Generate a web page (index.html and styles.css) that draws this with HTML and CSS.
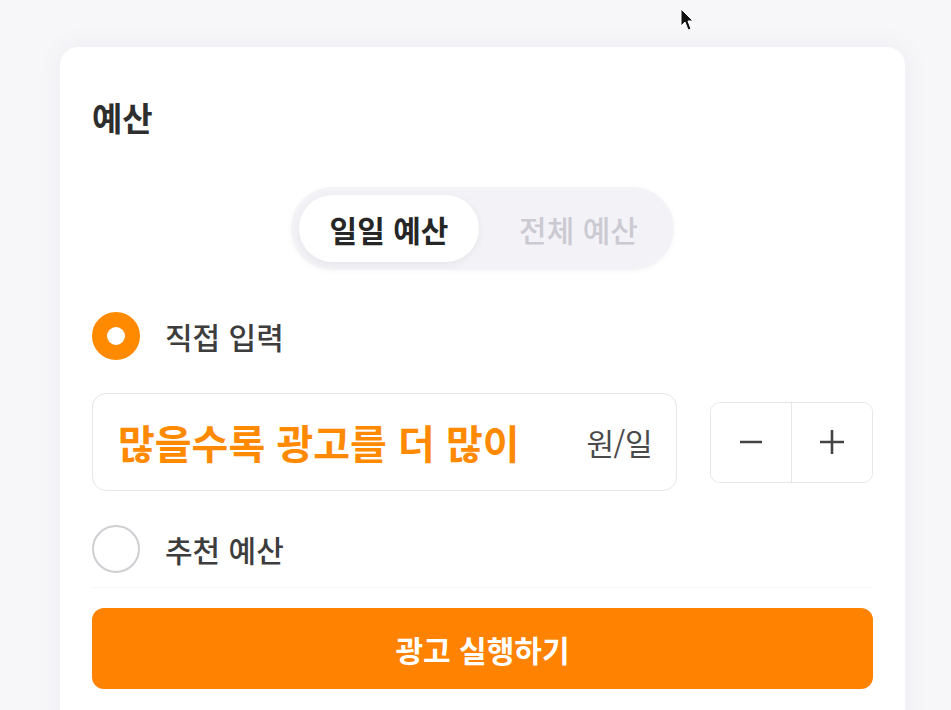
FILE: index.html
```html
<!DOCTYPE html>
<html lang="ko">
<head>
<meta charset="utf-8">
<title>예산</title>
<link rel="stylesheet" href="styles.css">
</head>
<body>
<svg class="cursor" width="14" height="24" viewBox="0 0 14 24"><path d="M1 1 L1 18 L5 14 L8 22 L11 21 L8 13 L13 13 Z" fill="#111" stroke="#fff" stroke-width="1"/></svg>
<main class="card">
  <h2 class="title">예산</h2>
  <div class="seg-wrap">
    <div class="seg">
      <button class="seg-item active">일일 예산</button>
      <button class="seg-item">전체 예산</button>
    </div>
  </div>
  <label class="radio-row">
    <span class="radio checked"></span>
    <span class="radio-label">직접 입력</span>
  </label>
  <div class="input-row">
    <div class="input">
      <span class="placeholder">많을수록 광고를 더 많이</span>
      <span class="unit">원/일</span>
    </div>
    <div class="stepper">
      <button class="step">
        <svg width="28" height="28" viewBox="0 0 28 28"><path d="M3 14 H25" stroke="#444" stroke-width="2.6"/></svg>
      </button>
      <button class="step">
        <svg width="28" height="28" viewBox="0 0 28 28"><path d="M2 14 H26 M14 2 V26" stroke="#444" stroke-width="2.6"/></svg>
      </button>
    </div>
  </div>
  <label class="radio-row second">
    <span class="radio"></span>
    <span class="radio-label">추천 예산</span>
  </label>
  <div class="footer">
    <button class="cta">광고 실행하기</button>
  </div>
</main>
</body>
</html>
```
FILE: styles.css
```css
* { box-sizing: border-box; }
html, body { margin: 0; height: 100%; }
body {
  background: #f7f6f9;
  font-family: "Noto Sans CJK KR", "Noto Sans", sans-serif;
  padding: 47px 46px 0 60px;
  overflow: hidden;
  position: relative;
}
.cursor {
  position: absolute;
  left: 680px;
  top: 8px;
}
.card {
  background: #ffffff;
  border-radius: 18px;
  box-shadow: 0 0 24px rgba(120, 110, 140, 0.08);
  padding: 50px 32px 40px 32px;
  min-height: 720px;
}
.title {
  margin: 0;
  font-size: 33px;
  font-weight: 700;
  color: #2e2e2e;
  line-height: 40px;
}
.seg-wrap {
  display: flex;
  justify-content: center;
  margin-top: 50px;
}
.seg {
  display: flex;
  background: #f3f2f6;
  border-radius: 42px;
  padding: 8px;
  box-shadow: 0 1px 6px rgba(0,0,0,0.04);
}
.seg-item {
  border: 0;
  background: transparent;
  font-family: inherit;
  font-size: 30px;
  height: 67px;
  border-radius: 34px;
  color: #cbcad3;
  font-weight: 500;
  padding: 0 0 0 12px;
  width: 187px;
}
.seg-item.active {
  width: 180px;
  padding: 0;
  background: #ffffff;
  color: #262626;
  font-weight: 700;
  box-shadow: 0 2px 8px rgba(0,0,0,0.06);
}
.radio-row {
  display: flex;
  align-items: center;
  gap: 25px;
  margin-top: 41px;
  height: 50px;
}
.radio-row.second {
  margin-top: 33px;
}
.radio {
  width: 48px;
  height: 48px;
  border-radius: 50%;
  border: 2px solid #cfcfd3;
  background: #fff;
  flex: none;
}
.radio.checked {
  border: 15px solid #ff8a00;
}
.radio-label {
  font-size: 30px;
  color: #3d3d3d;
  font-weight: 500;
}
.input-row {
  display: flex;
  align-items: center;
  gap: 33px;
  margin-top: 32px;
}
.input {
  flex: none;
  width: 585px;
  height: 98px;
  border: 1.5px solid #e6e6e9;
  border-radius: 14px;
  display: flex;
  align-items: center;
  justify-content: space-between;
  padding: 0 24px 0 25px;
}
.placeholder {
  color: #ff8a00;
  font-size: 40px;
  font-weight: 700;
}
.unit {
  font-size: 30px;
  color: #4a4a4a;
  letter-spacing: -0.5px;
}
.stepper {
  display: flex;
  width: 163px;
  height: 81px;
  border: 1.5px solid #e6e6e9;
  border-radius: 10px;
  overflow: hidden;
}
.step {
  flex: 1;
  border: 0;
  background: #fff;
  display: flex;
  align-items: center;
  justify-content: center;
  padding: 0;
}
.step + .step {
  border-left: 1.5px solid #e6e6e9;
}
.footer {
  margin-top: 13px;
  border-top: 1px solid #f7f7f9;
  padding-top: 20px;
}
.cta {
  width: 100%;
  height: 81px;
  border: 0;
  border-radius: 12px;
  background: #ff8200;
  color: #ffffff;
  font-family: inherit;
  font-size: 30px;
  font-weight: 700;
}
```
